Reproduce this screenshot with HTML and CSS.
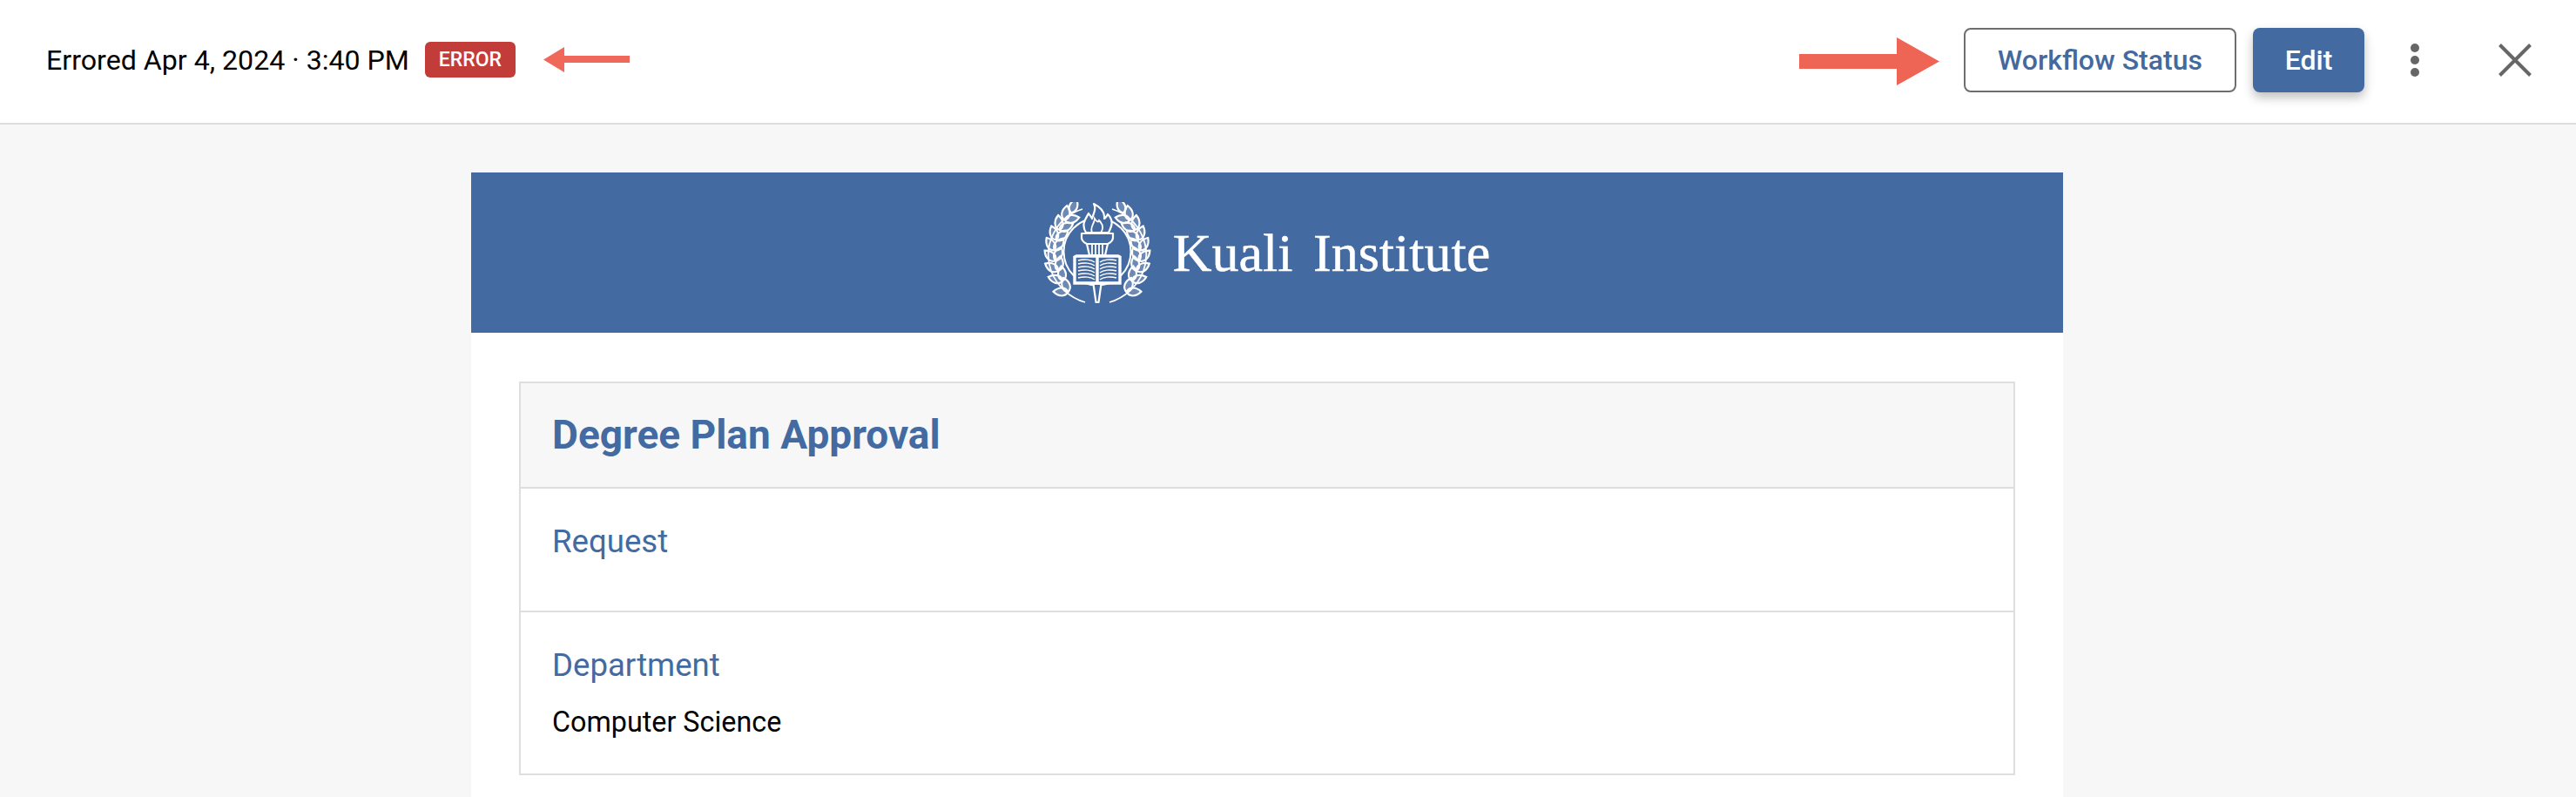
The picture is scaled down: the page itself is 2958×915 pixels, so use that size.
FILE: index.html
```html
<!DOCTYPE html>
<html lang="en">
<head>
<meta charset="utf-8">
<title>Degree Plan Approval</title>
<link rel="stylesheet" href="styles.css">
</head>
<body>
<header class="topbar">
  <div class="status">
    <span class="status-text">Errored Apr 4, 2024 · 3:40 PM</span>
    <span class="badge">ERROR</span>
    <svg class="arrow-left" width="99" height="29" viewBox="0 0 99 29"><path d="M0 14.5 24 0V10H99V18H24V29Z"/></svg>
  </div>
  <div class="actions">
    <svg class="arrow-right" width="161" height="55" viewBox="0 0 161 55"><path d="M0 19H112V0L161 27.5 112 55V36H0Z"/></svg>
    <button class="btn btn-outline">Workflow Status</button>
    <button class="btn btn-primary">Edit</button>
    <svg class="icon-more" width="14" height="38" viewBox="0 0 14 38"><circle cx="7" cy="5" r="5"/><circle cx="7" cy="19" r="5"/><circle cx="7" cy="33" r="5"/></svg>
    <svg class="icon-close" width="38" height="38" viewBox="0 0 38 38"><path d="M1.5 1.5 36.5 36.5M36.5 1.5 1.5 36.5"/></svg>
  </div>
</header>
<main class="page">
  <article class="paper">
    <div class="brand">
      <svg class="crest" width="130" height="118" viewBox="-65 -57 130 118">
        <defs>
          <path id="leaf" d="M0 0C3-6 11-6 17 0 11 6 3 6 0 0Z"/>
          <g id="branch">
            <path class="ln" d="M-14 58A60 60 0 0 1-53 22A55 55 0 0 1-17-49"/>
            <use href="#leaf" transform="rotate(-54) translate(-57 0) rotate(-125)"/>
            <use href="#leaf" transform="rotate(-54) translate(-57 0) rotate(-55)"/>
            <use href="#leaf" transform="rotate(-40) translate(-52 0) rotate(-125)"/>
            <use href="#leaf" transform="rotate(-40) translate(-52 0) rotate(-55)"/>
            <use href="#leaf" transform="rotate(-26) translate(-50 0) rotate(-125)"/>
            <use href="#leaf" transform="rotate(-26) translate(-50 0) rotate(-55)"/>
            <use href="#leaf" transform="rotate(-12) translate(-49 0) rotate(-125)"/>
            <use href="#leaf" transform="rotate(-12) translate(-49 0) rotate(-55)"/>
            <use href="#leaf" transform="rotate(2) translate(-49 0) rotate(-125)"/>
            <use href="#leaf" transform="rotate(2) translate(-49 0) rotate(-55)"/>
            <use href="#leaf" transform="rotate(16) translate(-49 0) rotate(-125)"/>
            <use href="#leaf" transform="rotate(16) translate(-49 0) rotate(-55)"/>
            <use href="#leaf" transform="rotate(30) translate(-50 0) rotate(-125)"/>
            <use href="#leaf" transform="rotate(30) translate(-50 0) rotate(-55)"/>
            <use href="#leaf" transform="rotate(44) translate(-52 0) rotate(-125)"/>
            <use href="#leaf" transform="rotate(44) translate(-52 0) rotate(-55)"/>
            <use href="#leaf" transform="rotate(56) translate(-54 0) rotate(-125)"/>
          </g>
        </defs>
        <use href="#branch"/>
        <use href="#branch" transform="scale(-1 1)"/>
        <circle class="ring" r="38.5"/>
        <path class="solid" d="M-4.5 37H4.5L1.5 58H-1.5Z"/>
        <path class="solid" d="M-13-22C-19-32-13-38-10-44-8-41-7-40-6-38-4-45-1-49-4-55 4-51 9-45 8-38 10-39 11-41 12-43 19-36 17-30 13-22Z"/>
        <path class="ln" d="M-6-22C-9-29-3-32-3-38-1-35 1-33 2-36 7-31 7-26 4-22"/>
        <path class="solid" d="M-18-21H18V-16C18-12 14-10 12-9H-12C-14-10-18-12-18-16Z"/>
        <path class="solid" d="M-12-9H12L9 4H-9Z"/>
        <path class="ln" d="M-6-8V3M-2-8V3M2-8V3M6-8V3"/>
        <path class="page-sheet" d="M-26 6-24 5H0V36H-26ZM26 6 24 5H0V36H26Z"/>
        <path class="book-lines" d="M-22 10C-15 8-7 9-3 12M-22 14C-15 12-7 13-3 16M-22 18C-15 16-7 17-3 20M-22 22C-15 20-7 21-3 24M-22 26C-15 24-7 25-3 28M-22 30C-15 28-7 29-3 32M22 10C15 8 7 9 3 12M22 14C15 12 7 13 3 16M22 18C15 16 7 17 3 20M22 22C15 20 7 21 3 24M22 26C15 24 7 25 3 28M22 30C15 28 7 29 3 32"/>
      </svg>
      <span class="brand-name">Kuali Institute</span>
    </div>
    <div class="form">
      <section class="card">
        <h1 class="card-title">Degree Plan Approval</h1>
        <div class="field field-request">
          <div class="field-label">Request</div>
        </div>
        <div class="field field-department">
          <div class="field-label">Department</div>
          <div class="field-value">Computer Science</div>
        </div>
      </section>
    </div>
  </article>
</main>
</body>
</html>
```
FILE: styles.css
```css
* { box-sizing: border-box; }
html, body { height: 100%; }
body {
  margin: 0;
  height: 915px;
  overflow: hidden;
  background: #f7f7f7;
  font-family: Roboto, "Liberation Sans", sans-serif;
  color: #000;
}
.topbar {
  height: 143px;
  background: #fff;
  border-bottom: 2px solid #dedede;
  padding: 0 51px 4px 53px;
  display: flex;
  align-items: center;
  justify-content: space-between;
}
.status { display: flex; align-items: center; }
.status-text { font-size: 32.15px; line-height: 40px; }
.badge {
  margin-left: 18px;
  width: 104px;
  height: 41px;
  border-radius: 6px;
  background: #c23d3a;
  color: #fff;
  font-size: 23px;
  font-weight: 500;
  display: flex;
  align-items: center;
  justify-content: center;
}
.arrow-left { margin-left: 32px; fill: #f0685a; }
.actions { display: flex; align-items: center; }
.arrow-right { fill: #ef6555; margin-right: 28px; margin-top: 3px; }
.btn {
  height: 74px;
  font-family: inherit;
  font-size: 32px;
  font-weight: 500;
  border-radius: 8px;
  padding: 0;
}
.btn-outline {
  width: 313px;
  background: #fff;
  border: 2px solid #6e6e6e;
  color: #436a9f;
}
.btn-primary {
  width: 128px;
  margin-left: 19px;
  background: #436aa1;
  border: 0;
  color: #fff;
  box-shadow: 0 6px 12px rgba(0, 0, 0, .25);
}
.icon-more { margin-left: 51px; fill: #666; }
.icon-close { margin-left: 89px; fill: none; stroke: #666; stroke-width: 4; }
.page { display: flex; justify-content: center; padding: 55px 48px 0 0; }
.paper {
  width: 1828px;
  height: 717px;
  background: #fff;
}
.brand {
  height: 184px;
  background: #436aa1;
  display: flex;
  align-items: center;
  justify-content: center;
  padding-right: 4px;
}
.crest { margin-right: 22px; margin-top: 1px; }
.crest use { fill: rgba(255, 255, 255, .22); stroke: #fff; stroke-width: 2.2; }
.ln { fill: none; stroke: #fff; stroke-width: 1.8; }
.ring { fill: none; stroke: #fff; stroke-width: 2; }
.solid { fill: #436aa1; stroke: #fff; stroke-width: 2.2; stroke-linejoin: round; }
.page-sheet { fill: #436aa1; stroke: #fff; stroke-width: 3.4; }
.book-lines { fill: none; stroke: #fff; stroke-width: 1.4; }
.brand-name {
  font-family: "Liberation Serif", "Times New Roman", serif;
  font-size: 62px;
  line-height: 1;
  word-spacing: 8px;
  color: #fff;
  -webkit-text-stroke: .5px #fff;
}
.form { padding: 56px 55px 0; }
.card { border: 2px solid #dedede; height: 452px; }
.card-title {
  margin: 0;
  height: 121px;
  padding: 0 36px 2px;
  background: #f7f7f7;
  border-bottom: 2px solid #dedede;
  color: #436aa1;
  font-size: 46px;
  font-weight: 700;
  display: flex;
  align-items: center;
}
.field { padding: 39px 36px 0; }
.field-request { height: 142px; border-bottom: 2px solid #dedede; }
.field-label { font-size: 36.6px; line-height: 44px; color: #436aa1; }
.field-value { font-size: 32.3px; line-height: 40px; margin-top: 23px; }
```
